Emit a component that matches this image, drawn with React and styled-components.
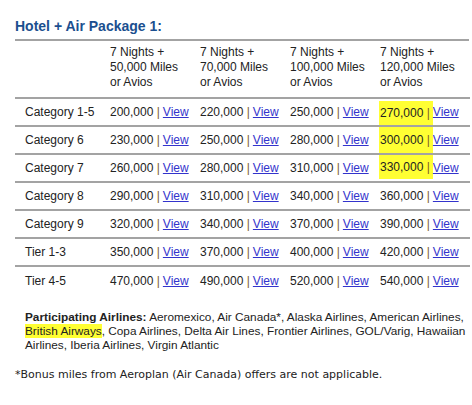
import React from "react";
import styled, { createGlobalStyle } from "styled-components";

const Global = createGlobalStyle`
  html, body { margin: 0; padding: 0; background: #fff; }
  body { font-family: "Liberation Sans", Arial, sans-serif; color: #222; }
`;

const Page = styled.div`
  padding: 18px 3px 0 15px;
  width: 454px;
`;

const Title = styled.h2`
  margin: 0;
  font-size: 14px;
  line-height: 17px;
  font-weight: bold;
  color: #1b4f8f;
  padding-bottom: 4px;
  border-bottom: 2px solid #a3a3a3;
`;

const Table = styled.div`
  display: grid;
  grid-template-columns: 95px repeat(4, 90px);
  font-size: 12px;
`;

const Row = styled.div`
  display: contents;
`;

const Cell = styled.div`
  display: flex;
  align-items: ${(p) => (p.$head ? "flex-start" : "center")};
  box-sizing: border-box;
  padding-left: ${(p) => (p.$label ? "10px" : "0")};
  padding-top: ${(p) => (p.$head ? "4px" : "0")};
  height: ${(p) => (p.$head ? "58px" : "28px")};
  line-height: 15px;
  border-bottom: ${(p) => (p.$last ? "none" : "2px solid #a3a3a3")};
  white-space: nowrap;
`;

const HeadText = styled.div`
  white-space: normal;
  line-height: 15px;
`;

const Mark = styled.span`
  display: flex;
  align-items: center;
  align-self: stretch;
  margin-left: -1px;
  padding: 0 3px 0 1px;
  background: #ffff33;
  margin-top: ${(p) => (p.$pos === "top" ? "2px" : "0")};
  margin-bottom: ${(p) => (p.$pos === "bottom" ? "2px" : "0")};
  white-space: pre;
`;

const Plain = styled.span`
  white-space: pre;
`;

const Pipe = styled.span`
  color: #7a5a2a;
`;

const Link = styled.a`
  color: #3333cc;
  text-decoration: underline;
  margin-left: ${(p) => (p.$tight ? "0" : "3px")};
`;

const Notes = styled.p`
  margin: 15px 0 0 10px;
  font-size: 11.8px;
  line-height: 14px;
  width: 442px;
`;

const Strong = styled.b`
  font-weight: bold;
`;

const Hi = styled.span`
  background: #ffff33;
`;

const Foot = styled.p`
  margin: 16px 0 0 0;
  font-family: "DejaVu Sans", Verdana, sans-serif;
  font-size: 11px;
  line-height: 14px;
`;

const heads = ["50,000", "70,000", "100,000", "120,000"];
const rows = [
  ["Category 1-5", ["200,000", "220,000", "250,000", "270,000"], "top"],
  ["Category 6", ["230,000", "250,000", "280,000", "300,000"], "mid"],
  ["Category 7", ["260,000", "280,000", "310,000", "330,000"], "bottom"],
  ["Category 8", ["290,000", "310,000", "340,000", "360,000"], null],
  ["Category 9", ["320,000", "340,000", "370,000", "390,000"], null],
  ["Tier 1-3", ["350,000", "370,000", "400,000", "420,000"], null],
  ["Tier 4-5", ["470,000", "490,000", "520,000", "540,000"], null],
];

export default function App() {
  return (
    <>
      <Global />
      <Page>
        <Title>Hotel + Air Package 1:</Title>
        <Table>
          <Row>
            <Cell $head $label />
            {heads.map((h) => (
              <Cell $head key={h}>
                <HeadText>
                  7 Nights +<br />
                  {h} Miles<br />
                  or Avios
                </HeadText>
              </Cell>
            ))}
          </Row>
          {rows.map(([label, vals, hi], ri) => {
            const last = ri === rows.length - 1;
            return (
              <Row key={label}>
                <Cell $label $last={last}>{label}</Cell>
                {vals.map((v, ci) => {
                  const on = hi && ci === 3;
                  return (
                    <Cell $last={last} key={ci}>
                      {on ? (
                        <Mark $pos={hi}>
                          {v} <Pipe>|</Pipe>
                        </Mark>
                      ) : (
                        <Plain>
                          {v} <Pipe>|</Pipe>
                        </Plain>
                      )}
                      <Link href="#" $tight={on}>View</Link>
                    </Cell>
                  );
                })}
              </Row>
            );
          })}
        </Table>
        <Notes>
          <Strong>Participating Airlines:</Strong> Aeromexico, Air Canada*, Alaska Airlines, American Airlines,{" "}
          <Hi>British Airways</Hi>, Copa Airlines, Delta Air Lines, Frontier Airlines, GOL/Varig, Hawaiian
          Airlines, Iberia Airlines, Virgin Atlantic
        </Notes>
        <Foot>*Bonus miles from Aeroplan (Air Canada) offers are not applicable.</Foot>
      </Page>
    </>
  );
}
